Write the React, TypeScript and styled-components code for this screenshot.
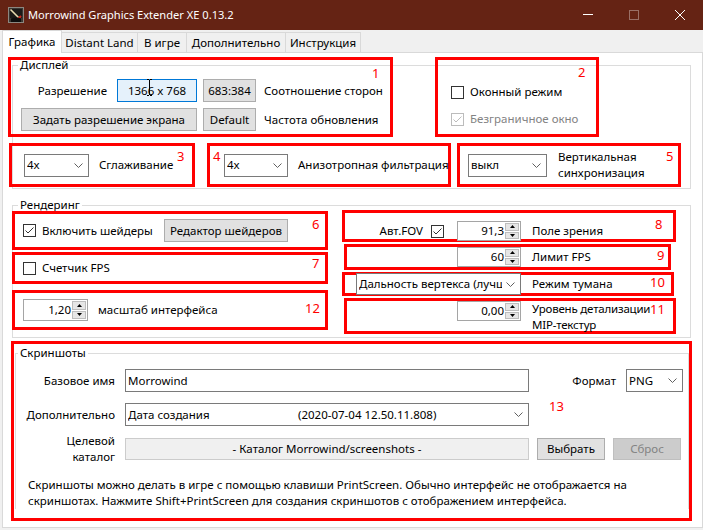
import React from "react";
import styled, { createGlobalStyle, css } from "styled-components";

const FONT = `"Noto Sans", "Open Sans", "Liberation Sans", Arial, sans-serif`;

const GlobalStyle = createGlobalStyle`
  * { box-sizing: border-box; }
  html, body { margin: 0; padding: 0; background: #f0f0f0; }
  body { font-family: ${FONT}; font-size: 11.5px; line-height: 16px; color: #000; }
`;

const Window = styled.div`
  width: 703px;
  height: 530px;
  overflow: hidden;
  background: #f0f0f0;
  display: flex;
  flex-direction: column;
`;

const TitleBar = styled.header`
  height: 30px;
  flex-shrink: 0;
  background: #652314;
  display: flex;
  align-items: center;
`;

const AppIcon = styled.svg`
  width: 16px;
  height: 16px;
  margin-left: 8px;
  flex-shrink: 0;
`;

const TitleText = styled.div`
  flex: 1;
  margin-left: 4px;
  color: #fff;
  font-size: 11.1px;
  white-space: nowrap;
`;

const CaptionBtn = styled.div`
  width: 46px;
  height: 30px;
  display: flex;
  align-items: center;
  justify-content: center;
`;

const TabStrip = styled.nav`
  height: 22px;
  flex-shrink: 0;
  display: flex;
  align-items: flex-end;
  padding-left: 2px;
  position: relative;
  z-index: 1;
`;

const Tab = styled.div<{ $w: number; $active?: boolean }>`
  width: ${(p) => p.$w}px;
  height: 20px;
  display: flex;
  align-items: center;
  justify-content: center;
  border: 1px solid #d9d9d9;
  border-left: none;
  border-bottom: none;
  background: #f0f0f0;
  white-space: nowrap;
  ${(p) =>
    p.$active &&
    css`
      height: 23px;
      margin-bottom: -1px;
      background: #fff;
      border-left: 1px solid #d9d9d9;
    `}
`;

const Pane = styled.main`
  margin-left: 2px;
  width: 701px;
  height: 476px;
  flex-shrink: 0;
  background: #fff;
  border: 1px solid #d9d9d9;
  display: flex;
  flex-direction: column;
  align-items: flex-start;
`;

const Group = styled.fieldset<{ $mt: number; $ml?: number; $w: number; $pb?: number; $open?: boolean }>`
  margin: ${(p) => p.$mt}px 0 0 ${(p) => p.$ml ?? 9}px;
  padding: 0 0 ${(p) => p.$pb ?? 0}px 0;
  width: ${(p) => p.$w}px;
  min-width: 0;
  border: 1px solid #dcdcdc;
  ${(p) =>
    p.$open &&
    css`
      border-bottom: none;
    `}
`;

const Legend = styled.legend<{ $ml?: number }>`
  margin-left: ${(p) => p.$ml ?? 5}px;
  padding: 0 2px;
  line-height: 14px;
`;

const Mark = styled.div<{
  $w: number;
  $h: number;
  $ml?: number;
  $mt?: number;
  $pl?: number;
  $pt?: number;
  $align?: string;
  $col?: boolean;
}>`
  position: relative;
  flex-shrink: 0;
  width: ${(p) => p.$w}px;
  height: ${(p) => p.$h}px;
  margin-left: ${(p) => p.$ml ?? 0}px;
  margin-top: ${(p) => p.$mt ?? 0}px;
  padding-left: ${(p) => p.$pl ?? 0}px;
  padding-top: ${(p) => p.$pt ?? 0}px;
  border: 3px solid #ff0000;
  display: flex;
  flex-direction: ${(p) => (p.$col ? "column" : "row")};
  align-items: ${(p) => p.$align ?? "center"};
`;

const Num = styled.span<{ $x: number; $y: number }>`
  position: absolute;
  left: ${(p) => p.$x}px;
  top: ${(p) => p.$y}px;
  color: #ff0000;
  font-size: 13px;
  line-height: 13px;
`;

const Row = styled.div<{ $mt?: number; $ml?: number }>`
  display: flex;
  align-items: center;
  margin-top: ${(p) => p.$mt ?? 0}px;
  margin-left: ${(p) => p.$ml ?? 0}px;
`;

const Btn = styled.div<{ $w: number; $h?: number; $focus?: boolean; $disabled?: boolean }>`
  position: relative;
  flex-shrink: 0;
  width: ${(p) => p.$w}px;
  height: ${(p) => p.$h ?? 23}px;
  display: flex;
  align-items: center;
  justify-content: center;
  white-space: nowrap;
  background: #e1e1e1;
  border: 1px solid #adadad;
  ${(p) =>
    p.$focus &&
    css`
      background: #e5f1fb;
      border-color: #0078d7;
    `}
  ${(p) =>
    p.$disabled &&
    css`
      background: #cccccc;
      border-color: #bfbfbf;
      color: #838383;
    `}
`;

const IBeam = styled.svg`
  position: absolute;
  left: 29px;
  top: -1px;
`;

const DispGrid = styled.div`
  display: grid;
  grid-template-columns: 176px 53px auto;
  column-gap: 6px;
  row-gap: 6px;
  align-items: center;
`;

const ResCell = styled.div`
  display: flex;
  align-items: center;
  justify-content: flex-end;
  gap: 10px;
`;

const Side = styled.div<{ $ml?: number; $gray?: boolean; $tight?: boolean }>`
  margin-left: ${(p) => p.$ml ?? 0}px;
  white-space: nowrap;
  color: ${(p) => (p.$gray ? "#838383" : "#000")};
  letter-spacing: ${(p) => (p.$tight ? "-0.2px" : "normal")};
`;

const CheckStack = styled.div`
  display: flex;
  flex-direction: column;
  gap: 11px;
`;

const CheckItem = styled.div<{ $w?: number }>`
  display: flex;
  align-items: center;
  gap: 6px;
  height: 16px;
  flex-shrink: 0;
  ${(p) =>
    p.$w &&
    css`
      width: ${p.$w}px;
    `}
`;

const BoxMark = styled.span<{ $disabled?: boolean }>`
  width: 13px;
  height: 13px;
  flex-shrink: 0;
  display: inline-flex;
  background: #fff;
  border: 1px solid ${(p) => (p.$disabled ? "#bcbcbc" : "#333333")};
`;

const Combo = styled.div<{ $w: number; $h?: number }>`
  flex-shrink: 0;
  width: ${(p) => p.$w}px;
  height: ${(p) => p.$h ?? 23}px;
  display: flex;
  align-items: center;
  background: #fff;
  border: 1px solid #7a7a7a;
  padding-left: 2px;
`;

const ComboText = styled.span`
  flex: 1;
  min-width: 0;
  overflow: hidden;
  white-space: nowrap;
  display: flex;
`;

const ComboLead = styled.span<{ $w: number }>`
  width: ${(p) => p.$w}px;
  flex-shrink: 0;
`;

const ChevronSvg = styled.svg`
  flex-shrink: 0;
  margin: 0 5px 0 4px;
`;

const Spin = styled.div<{ $w: number; $h: number }>`
  flex-shrink: 0;
  width: ${(p) => p.$w}px;
  height: ${(p) => p.$h}px;
  display: flex;
  background: #fff;
  border: 1px solid #a5a5a5;
`;

const SpinValue = styled.div`
  flex: 1;
  display: flex;
  align-items: center;
  justify-content: flex-end;
  padding-right: 1px;
`;

const SpinBtns = styled.div`
  width: 15px;
  display: flex;
  flex-direction: column;
  padding: 1px 1px 1px 0;
  gap: 1px;
`;

const SpinBtn = styled.div`
  flex: 1;
  display: flex;
  align-items: center;
  justify-content: center;
  background: #e6e6e6;
  border: 1px solid #bdbdbd;
`;

const Cell = styled.div<{ $w: number }>`
  width: ${(p) => p.$w}px;
  flex-shrink: 0;
  display: flex;
  align-items: center;
  justify-content: flex-end;
`;

const RenderGrid = styled.div`
  display: grid;
  grid-template-columns: 316px 334px;
  column-gap: 14px;
  align-items: start;
  margin-left: -1px;
`;

const Column = styled.div<{ $mt: number }>`
  display: flex;
  flex-direction: column;
  align-items: flex-start;
  margin-top: ${(p) => p.$mt}px;
`;

const FormRow = styled.div<{ $mt: number; $h?: number }>`
  display: flex;
  align-items: center;
  margin-top: ${(p) => p.$mt}px;
  padding-right: 5px;
  ${(p) =>
    p.$h &&
    css`
      height: ${p.$h}px;
    `}
`;

const FieldLabel = styled.div`
  width: 99px;
  flex-shrink: 0;
  margin-right: 10px;
  text-align: right;
  white-space: nowrap;
`;

const TextBox = styled.div<{ $w: number }>`
  width: ${(p) => p.$w}px;
  height: 23px;
  flex-shrink: 0;
  display: flex;
  align-items: center;
  padding-left: 2px;
  background: #fff;
  border: 1px solid #7a7a7a;
`;

const ReadField = styled.div<{ $w: number }>`
  width: ${(p) => p.$w}px;
  height: 22px;
  flex-shrink: 0;
  display: flex;
  align-items: center;
  justify-content: center;
  background: #f0f0f0;
  border: 1px solid #cccccc;
`;

const FormatGroup = styled.div`
  margin-left: auto;
  display: flex;
  align-items: center;
  gap: 10px;
`;

const Help = styled.p`
  margin: 12px 0 0 12px;
  white-space: nowrap;
  line-height: 16px;
`;

const Chevron = () => (
  <ChevronSvg width="9" height="5" viewBox="0 0 9 5">
    <path d="M0.5 0.5L4.5 4.5L8.5 0.5" fill="none" stroke="#606060" />
  </ChevronSvg>
);

const CheckBox = ({ checked, disabled }: { checked?: boolean; disabled?: boolean }) => (
  <BoxMark $disabled={disabled}>
    {checked && (
      <svg width="11" height="11" viewBox="0 0 11 11">
        <path d="M1.5 5.5L4 8L9.5 2.5" fill="none" stroke={disabled ? "#bcbcbc" : "#333"} strokeWidth="1" />
      </svg>
    )}
  </BoxMark>
);

const SpinBox = ({ w, h, value }: { w: number; h: number; value: string }) => (
  <Spin $w={w} $h={h}>
    <SpinValue>{value}</SpinValue>
    <SpinBtns>
      <SpinBtn>
        <svg width="5" height="3" viewBox="0 0 5 3">
          <path d="M0 3L2.5 0L5 3Z" fill="#000" />
        </svg>
      </SpinBtn>
      <SpinBtn>
        <svg width="5" height="3" viewBox="0 0 5 3">
          <path d="M0 0L2.5 3L5 0Z" fill="#000" />
        </svg>
      </SpinBtn>
    </SpinBtns>
  </Spin>
);

const Select = ({ w, h, children }: { w: number; h?: number; children: React.ReactNode }) => (
  <Combo $w={w} $h={h}>
    <ComboText>{children}</ComboText>
    <Chevron />
  </Combo>
);

export default function App() {
  return (
    <>
      <GlobalStyle />
      <Window>
        <TitleBar>
          <AppIcon viewBox="0 0 16 16">
            <rect x="0.5" y="0.5" width="15" height="15" fill="#3a3632" stroke="#8c8780" />
            <rect x="2" y="2" width="12" height="9" fill="#1c1a18" />
            <path d="M2.5 2.5L11 11" stroke="#e9dcb0" strokeWidth="1.6" />
            <path d="M9.5 12.5L13 9" stroke="#d42a1e" strokeWidth="2" />
            <path d="M3 15V11.5Q8 9.5 13 11.5V15Z" fill="#0d0d0d" />
          </AppIcon>
          <TitleText>Morrowind Graphics Extender XE 0.13.2</TitleText>
          <CaptionBtn>
            <svg width="10" height="10" viewBox="0 0 10 10">
              <path d="M0 4.5H10" stroke="#fff" />
            </svg>
          </CaptionBtn>
          <CaptionBtn>
            <svg width="10" height="10" viewBox="0 0 10 10">
              <rect x="0.5" y="0.5" width="9" height="9" fill="none" stroke="rgba(255,255,255,0.35)" />
            </svg>
          </CaptionBtn>
          <CaptionBtn>
            <svg width="10" height="10" viewBox="0 0 10 10">
              <path d="M0 0L10 10M10 0L0 10" stroke="#fff" />
            </svg>
          </CaptionBtn>
        </TitleBar>

        <TabStrip>
          <Tab $w={60} $active>Графика</Tab>
          <Tab $w={76}>Distant Land</Tab>
          <Tab $w={49}>В игре</Tab>
          <Tab $w={99}>Дополнительно</Tab>
          <Tab $w={75}>Инструкция</Tab>
        </TabStrip>

        <Pane>
          <Group $mt={5} $w={679} $pb={1}>
            <Legend>Дисплей</Legend>
            <Row $mt={-15} $ml={-5}>
              <Mark $w={385} $h={80} $pl={10} $pt={19} $align="flex-start">
                <DispGrid>
                  <ResCell>
                    <span>Разрешение</span>
                    <Btn $w={80} $focus>
                      1366 x 768
                      <IBeam width="5" height="17" viewBox="0 0 5 17">
                        <path d="M0 0.5H2M3 0.5H5M2.5 1V16M0 16.5H2M3 16.5H5" stroke="#000" fill="none" />
                      </IBeam>
                    </Btn>
                  </ResCell>
                  <Btn $w={53}>683:384</Btn>
                  <Side $ml={2}>Соотношение сторон</Side>
                  <Btn $w={176}>Задать разрешение экрана</Btn>
                  <Btn $w={53}>Default</Btn>
                  <Side $ml={2}>Частота обновления</Side>
                </DispGrid>
                <Num $x={361} $y={7}>1</Num>
              </Mark>
              <Mark $w={164} $h={80} $ml={42} $pl={13} $pt={24} $align="flex-start">
                <CheckStack>
                  <CheckItem>
                    <CheckBox />
                    <Side>Оконный режим</Side>
                  </CheckItem>
                  <CheckItem>
                    <CheckBox checked disabled />
                    <Side $gray>Безграничное окно</Side>
                  </CheckItem>
                </CheckStack>
                <Num $x={140} $y={6}>2</Num>
              </Mark>
            </Row>
            <Row $mt={6} $ml={-4}>
              <Mark $w={186} $h={44} $pl={12}>
                <Select w={65}>4x</Select>
                <Side $ml={10}>Сглаживание</Side>
                <Num $x={165} $y={4}>3</Num>
              </Mark>
              <Mark $w={244} $h={44} $ml={12} $pl={14}>
                <Select w={64}>4x</Select>
                <Side $ml={10}>Анизотропная фильтрация</Side>
                <Num $x={3} $y={4}>4</Num>
              </Mark>
              <Mark $w={224} $h={44} $ml={6} $pl={8}>
                <Select w={79}>выкл</Select>
                <Side $ml={11}>
                  Вертикальная
                  <br />
                  синхронизация
                </Side>
                <Num $x={206} $y={4}>5</Num>
              </Mark>
            </Row>
          </Group>

          <Group $mt={9} $w={679} $pb={3}>
            <Legend>Рендеринг</Legend>
            <RenderGrid>
              <Column $mt={-1}>
                <Mark $w={316} $h={39} $pl={8}>
                  <CheckItem $w={141}>
                    <CheckBox checked />
                    <Side>Включить шейдеры</Side>
                  </CheckItem>
                  <Btn $w={124}>Редактор шейдеров</Btn>
                  <Num $x={297} $y={4}>6</Num>
                </Mark>
                <Mark $w={316} $h={32} $mt={2} $pl={8}>
                  <CheckItem>
                    <CheckBox />
                    <Side>Счетчик FPS</Side>
                  </CheckItem>
                  <Num $x={297} $y={2}>7</Num>
                </Mark>
                <Mark $w={316} $h={40} $mt={6} $pl={8}>
                  <SpinBox w={65} h={22} value="1,20" />
                  <Side $ml={10}>масштаб интерфейса</Side>
                  <Num $x={290} $y={9}>12</Num>
                </Mark>
              </Column>
              <Column $mt={-2}>
                <Mark $w={334} $h={32} $pt={8} $align="flex-start">
                  <Row>
                    <Cell $w={176}>
                      <span>Авт.FOV</span>
                      <Row $ml={8}>
                        <CheckBox checked />
                      </Row>
                      <Row $ml={13}>
                        <SpinBox w={64} h={20} value="91,3" />
                      </Row>
                    </Cell>
                    <Side $ml={11}>Поле зрения</Side>
                  </Row>
                  <Num $x={310} $y={5}>8</Num>
                </Mark>
                <Mark $w={327} $h={26} $mt={2} $ml={2}>
                  <Cell $w={174}>
                    <SpinBox w={64} h={20} value="60" />
                  </Cell>
                  <Side $ml={11}>Лимит FPS</Side>
                  <Num $x={310} $y={2}>9</Num>
                </Mark>
                <Mark $w={332} $h={24} $mt={2}>
                  <Cell $w={176}>
                    <Select w={165} h={22}>
                      Дальность вертекса (лучш
                    </Select>
                  </Cell>
                  <Side $ml={11}>Режим тумана</Side>
                  <Num $x={305} $y={1}>10</Num>
                </Mark>
                <Mark $w={332} $h={36} $mt={2} $ml={2} $align="flex-start">
                  <Cell $w={174}>
                    <SpinBox w={64} h={20} value="0,00" />
                  </Cell>
                  <Side $ml={11} $tight>
                    Уровень детализации
                    <br />
                    MIP-текстур
                  </Side>
                  <Num $x={303} $y={2}>11</Num>
                </Mark>
              </Column>
            </RenderGrid>
          </Group>

          <Mark $w={681} $h={180} $ml={8} $mt={3} $col $align="flex-start">
            <Group $mt={2} $ml={1} $w={674} $open>
              <Legend $ml={2}>Скриншоты</Legend>
              <FormRow $mt={9}>
                <FieldLabel>Базовое имя</FieldLabel>
                <TextBox $w={404}>Morrowind</TextBox>
                <FormatGroup>
                  <span>Формат</span>
                  <Select w={57}>PNG</Select>
                </FormatGroup>
              </FormRow>
              <FormRow $mt={11}>
                <FieldLabel>Дополнительно</FieldLabel>
                <Select w={404}>
                  <ComboLead $w={170}>Дата создания</ComboLead>
                  <span>(2020-07-04 12.50.11.808)</span>
                </Select>
              </FormRow>
              <FormRow $mt={7} $h={32}>
                <FieldLabel>
                  Целевой
                  <br />
                  каталог
                </FieldLabel>
                <ReadField $w={404}>- Каталог Morrowind/screenshots -</ReadField>
                <Row $ml={8}>
                  <Btn $w={68} $h={22}>
                    Выбрать
                  </Btn>
                </Row>
                <Row $ml={8}>
                  <Btn $w={68} $h={22} $disabled>
                    Сброс
                  </Btn>
                </Row>
              </FormRow>
              <Help>
                Скриншоты можно делать в игре с помощью клавиши PrintScreen. Обычно интерфейс не отображается на
                <br />
                скриншотах. Нажмите Shift+PrintScreen для создания скриншотов с отображением интерфейса.
              </Help>
            </Group>
            <Num $x={535} $y={56}>13</Num>
          </Mark>
        </Pane>
      </Window>
    </>
  );
}
